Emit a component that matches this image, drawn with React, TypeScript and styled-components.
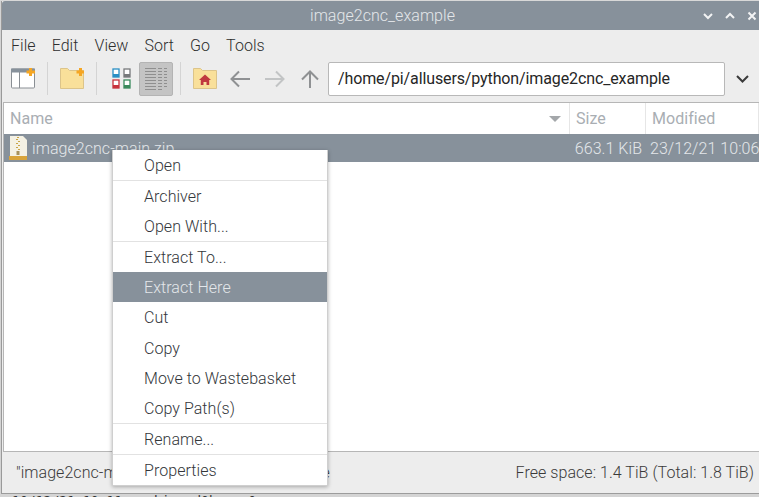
import React from "react";
import styled, { createGlobalStyle } from "styled-components";

const GlobalStyle = createGlobalStyle`
  html, body {
    margin: 0;
    padding: 0;
    width: 759px;
    height: 497px;
    overflow: hidden;
    background: #d4d4d4;
    font-family: Roboto, "Liberation Sans", sans-serif;
    font-weight: 300;
    letter-spacing: 0.05px;
  }
`;

const menuGroups = [
  ["Open"],
  ["Archiver", "Open With..."],
  ["Extract To...", "Extract Here", "Cut", "Copy", "Move to Wastebasket", "Copy Path(s)"],
  ["Rename..."],
  ["Properties"],
];

export default function App() {
  return (
    <Screen>
      <GlobalStyle />
      <TopStrip />
      <Window>
        <TitleBar>
          <TitleText>image2cnc_example</TitleText>
          <WindowButtons>
            <WindowIcon viewBox="0 0 10 10">
              <path d="M1 3l4 4 4-4" />
            </WindowIcon>
            <WindowIcon viewBox="0 0 10 10">
              <path d="M1 7l4-4 4 4" />
            </WindowIcon>
            <WindowIcon viewBox="0 0 10 10">
              <path d="M1.5 1.5l7 7M8.5 1.5l-7 7" />
            </WindowIcon>
          </WindowButtons>
        </TitleBar>

        <MenuBar>
          {["File", "Edit", "View", "Sort", "Go", "Tools"].map((m) => (
            <MenuBarItem key={m}>{m}</MenuBarItem>
          ))}
        </MenuBar>

        <Toolbar>
          <ToolButton>
            <svg width="24" height="21" viewBox="0 0 24 21">
              <rect x="0.5" y="1" width="23" height="19" rx="1" fill="#fff" stroke="#8a8f94" />
              <rect x="0" y="0.5" width="24" height="4" fill="#87919b" />
              <rect x="8" y="4" width="1" height="16" fill="#8a8f94" />
              <path d="M18 0h3v2.5h3v3h-3V8h-3V5.5h-2.5v-3H18z" fill="#f5a623" />
            </svg>
          </ToolButton>
          <ToolSeparator />
          <ToolButton>
            <svg width="24" height="21" viewBox="0 0 24 21">
              <path d="M0.5 20.5V0.5h7l2 2h14v18z" fill="#f9e09a" stroke="#dcc48a" />
              <path d="M19 0h3v2.5h2v3h-2V8h-3V5.5h-2.5v-3H19z" fill="#f5a623" />
            </svg>
          </ToolButton>
          <ToolSeparator />
          <ToolButton>
            <svg width="19" height="21" viewBox="0 0 19 21">
              <rect x="1" y="1" width="6" height="8" fill="#fff" stroke="#2a8fc4" strokeWidth="1.3" />
              <rect x="1" y="6" width="6" height="3" fill="#2a8fc4" />
              <rect x="12" y="1" width="6" height="8" fill="#fff" stroke="#77797b" strokeWidth="1.3" />
              <rect x="12" y="6" width="6" height="3" fill="#77797b" />
              <rect x="1" y="12" width="6" height="8" fill="#fff" stroke="#c8323c" strokeWidth="1.3" />
              <rect x="1" y="17" width="6" height="3" fill="#c8323c" />
              <rect x="12" y="12" width="6" height="8" fill="#fff" stroke="#3a8a5c" strokeWidth="1.3" />
              <rect x="12" y="17" width="6" height="3" fill="#3a8a5c" />
            </svg>
          </ToolButton>
          <ToolButton $active>
            <svg width="22" height="23" viewBox="0 0 22 23" stroke="#8f8f8f" fill="none">
              <path d="M0 1.5h11M0 4.5h11M0 7.5h11M0 10.5h11M0 13.5h11M0 16.5h11M0 19.5h11M0 22.5h11" />
              <path d="M13 1.5h4M13 4.500h4M13 7.5h4M13 10.5h4M13 13.5h4M13 16.5h4M13 19.5h4M13 22.5h4" />
              <path d="M19 1.5h3M19 4.5h3M19 7.5h3M19 10.5h3M19 13.5h3M19 16.5h3M19 19.5h3" />
            </svg>
          </ToolButton>
          <ToolSeparator />
          <ToolButton>
            <svg width="24" height="21" viewBox="0 0 24 21">
              <path d="M0.5 20.5V0.5h7l2 2h14v18z" fill="#f9e09a" stroke="#dcc48a" />
              <path d="M12 6.5l6 5.5h-1.8v5h-2.7v-3h-3v3H7.8v-5H6z" fill="#c0393f" />
            </svg>
          </ToolButton>
          <ToolButton>
            <NavIcon $tone="#8f9193" viewBox="0 0 20 18">
              <path d="M9 1.5L1.500 9 9 16.5M2 9h18" />
            </NavIcon>
          </ToolButton>
          <ToolButton>
            <NavIcon $tone="#c2c4c5" viewBox="0 0 20 18">
              <path d="M11 1.5L18.500 9 11 16.5M18 9H0" />
            </NavIcon>
          </ToolButton>
          <ToolButton>
            <NavIcon $tone="#8f9193" viewBox="0 0 20 18">
              <path d="M2 9.500L10 1.500l8 8M10 2v16" />
            </NavIcon>
          </ToolButton>
          <PathEntry>/home/pi/allusers/python/image2cnc_example</PathEntry>
          <PathDropdown>
            <svg width="13" height="8" viewBox="0 0 13 8" fill="none" stroke="#3a3a3a" strokeWidth="2">
              <path d="M1 1l5.500 5.500L12 1" />
            </svg>
          </PathDropdown>
        </Toolbar>

        <FileList>
          <HeaderRow>
            <HeaderCell>
              Name
              <SortCaret />
            </HeaderCell>
            <HeaderCell>Size</HeaderCell>
            <HeaderCell>Modified</HeaderCell>
          </HeaderRow>
          <FileRow>
            <NameCell>
              <svg width="18" height="24" viewBox="0 0 18 24">
                <path d="M1 0h13l4 4v20H1z" fill="#f4f1e4" />
                <rect x="0" y="20" width="18" height="4" fill="#d9a43a" />
                <path d="M8 1h2v1H8zM7 3h2v1H7zM9 5h2v1H9zM7 7h2v1H7zM9 9h2v1H9zM7 11h2v1H7zM9 13h2v1H9z" fill="#c9a548" />
                <rect x="7.500" y="15" width="3" height="4" fill="#a8925c" />
              </svg>
              image2cnc-main.zip
            </NameCell>
            <SizeCell>663.1 KiB</SizeCell>
            <DateCell>23/12/21 10:06</DateCell>
          </FileRow>
        </FileList>

        <StatusBar>
          <span>"image2cnc-main.zip" (663.1 KiB) Zip archive</span>
          <span>Free space: 1.4 TiB (Total: 1.8 TiB)</span>
        </StatusBar>
      </Window>
      <BottomStrip>10/12/21 10:11 ▸ skipped0bars 0</BottomStrip>

      <ContextMenu>
        {menuGroups.map((group, i) => (
          <MenuGroup key={i}>
            {group.map((item) => (
              <ContextItem key={item} $selected={item === "Extract Here"}>
                {item}
              </ContextItem>
            ))}
          </MenuGroup>
        ))}
      </ContextMenu>
    </Screen>
  );
}

const Screen = styled.div`
  position: relative;
  display: flex;
  flex-direction: column;
  width: 759px;
  height: 497px;
  overflow: hidden;
`;

const TopStrip = styled.div`
  height: 1px;
  background: #d8d8d8;
`;

const Window = styled.div`
  display: flex;
  flex-direction: column;
  height: 493px;
  margin-left: 1px;
  border-left: 1px solid #9a9a9a;
  border-bottom: 1px solid #9c9c9c;
  background: #ededed;
  box-sizing: border-box;
`;

const TitleBar = styled.div`
  position: relative;
  display: flex;
  align-items: center;
  justify-content: center;
  flex: 0 0 29px;
  background: #87919b;
  border-radius: 3px 0 0 0;
`;

const TitleText = styled.div`
  padding-left: 4px;
  font-size: 16px;
  color: #e4e7ea;
`;

const WindowButtons = styled.div`
  position: absolute;
  right: 2px;
  top: 10px;
  display: flex;
  gap: 12px;
`;

const WindowIcon = styled.svg`
  width: 10px;
  height: 10px;
  fill: none;
  stroke: #f2f3f4;
  stroke-width: 2;
`;

const MenuBar = styled.div`
  display: flex;
  align-items: center;
  flex: 0 0 30px;
  padding-left: 1px;
`;

const MenuBarItem = styled.div`
  padding: 0 8px;
  font-size: 16px;
  color: #2e2e2e;
`;

const Toolbar = styled.div`
  display: flex;
  align-items: center;
  gap: 1px;
  flex: 0 0 42px;
  padding: 0 0 5px 4px;
  box-sizing: border-box;
`;

const ToolButton = styled.div<{ $active?: boolean }>`
  display: flex;
  align-items: center;
  justify-content: center;
  flex: 0 0 34px;
  height: 34px;
  box-sizing: border-box;
  border-radius: 2px;
  background: ${(p) => (p.$active ? "#c4c4c4" : "transparent")};
  border: 1px solid ${(p) => (p.$active ? "#b4b4b4" : "transparent")};
`;

const ToolSeparator = styled.div`
  flex: 0 0 1px;
  height: 33px;
  margin: 0 6px;
  background: #d4d4d4;
`;

const NavIcon = styled.svg<{ $tone: string }>`
  width: 20px;
  height: 18px;
  fill: none;
  stroke: ${(p) => p.$tone};
  stroke-width: 2;
`;

const PathEntry = styled.div`
  display: flex;
  align-items: center;
  flex: 0 0 397px;
  height: 34px;
  padding-left: 9px;
  box-sizing: border-box;
  background: #fff;
  border: 1px solid #b8b8b8;
  border-radius: 2px;
  font-size: 16px;
  font-weight: 400;
  letter-spacing: -0.12px;
  color: #262626;
`;

const PathDropdown = styled.div`
  display: flex;
  align-items: center;
  justify-content: center;
  flex: 1;
  padding-right: 1px;
`;

const FileList = styled.div`
  flex: 1;
  margin-left: 1px;
  background: #fff;
  border-top: 1px solid #b6b6b6;
  border-left: 1px solid #b6b6b6;
  border-bottom: 1px solid #b6b6b6;
`;

const HeaderRow = styled.div`
  display: grid;
  grid-template-columns: 566px 76px 1fr;
  height: 31px;
`;

const HeaderCell = styled.div`
  position: relative;
  display: flex;
  align-items: center;
  padding-left: 6px;
  border-right: 1px solid #e6e6e6;
  font-size: 16px;
  font-weight: 400;
  color: #a9aeb3;
`;

const SortCaret = styled.div`
  position: absolute;
  right: 8px;
  top: 13px;
  border-left: 6px solid transparent;
  border-right: 6px solid transparent;
  border-top: 6px solid #a4a7aa;
`;

const FileRow = styled.div`
  display: grid;
  grid-template-columns: 566px 76px 1fr;
  align-items: center;
  height: 28px;
  background: #87919b;
  font-size: 16px;
  color: #e4e7ea;
  white-space: nowrap;
`;

const NameCell = styled.div`
  display: flex;
  align-items: center;
  gap: 5px;
  padding-left: 5px;
`;

const SizeCell = styled.div`
  padding-right: 4px;
  text-align: right;
`;

const DateCell = styled.div`
  padding-left: 4px;
`;

const StatusBar = styled.div`
  display: flex;
  align-items: center;
  justify-content: space-between;
  flex: 0 0 41px;
  padding: 0 5px 0 14px;
  font-size: 16px;
  color: #3a3a3a;
`;

const BottomStrip = styled.div`
  height: 3px;
  overflow: hidden;
  padding-left: 12px;
  font-family: "DejaVu Sans Mono", monospace;
  font-size: 13px;
  line-height: 13px;
  color: #333;
`;

const ContextMenu = styled.div`
  position: absolute;
  left: 112px;
  top: 150px;
  width: 216px;
  box-sizing: border-box;
  background: #fff;
  border: 1px solid #cfcfcf;
  border-top: 0;
  box-shadow: 0 1px 4px rgba(0, 0, 0, 0.3);
`;

const MenuGroup = styled.div`
  & + & {
    border-top: 1px solid #e2e2e2;
  }
`;

const ContextItem = styled.div<{ $selected?: boolean }>`
  display: flex;
  align-items: center;
  box-sizing: border-box;
  height: 30.1px;
  padding: 0.9px 0 0 31px;
  font-size: 16px;
  color: ${(p) => (p.$selected ? "#e4e7ea" : "#33363a")};
  background: ${(p) => (p.$selected ? "#87919b" : "transparent")};
`;
